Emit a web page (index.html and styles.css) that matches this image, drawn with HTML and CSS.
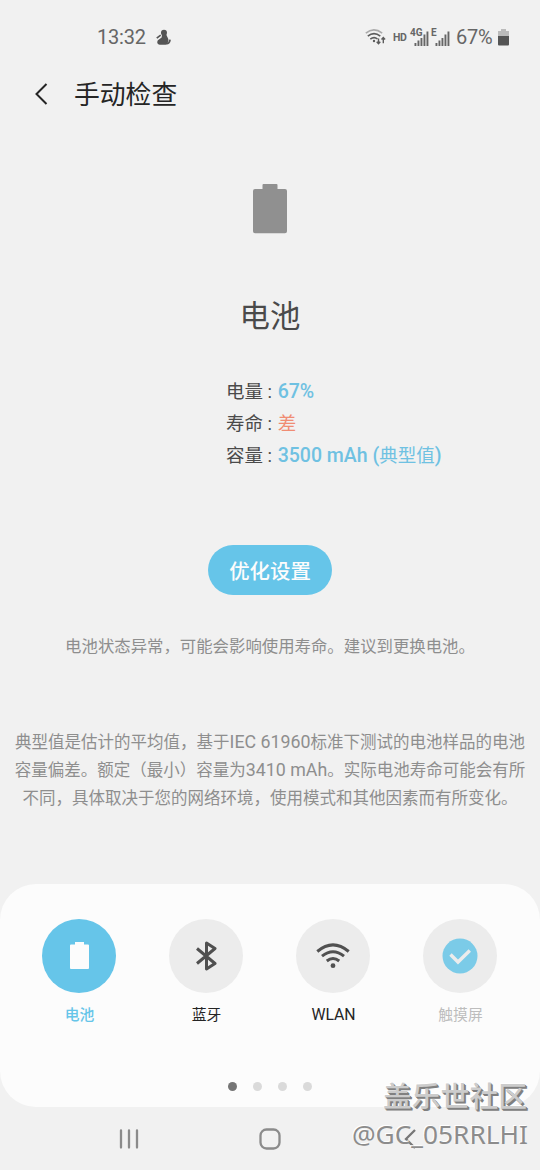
FILE: index.html
```
<!DOCTYPE html>
<html lang="zh-CN">
<head>
<meta charset="utf-8">
<title>手动检查</title>
<link rel="stylesheet" href="styles.css">
</head>
<body>
<div class="screen">
  <div class="status">
    <span class="clock">13:32</span>
    <svg class="notif" width="15" height="17" viewBox="0 0 16 18" fill="#555"><circle cx="8.500" cy="4" r="3.200"/><path d="M6.500 5.500 11 6l2 4.200C14 13 12 16.800 9.500 16.800H4C1.600 16.500.6 14.500 2 12L6 9z"/><path d="M.8 9.600 5 6.400M11 15.500c2 .3 3.600-1 4-4.200" fill="none" stroke="#555" stroke-width="1.800"/></svg>
    <svg class="wifi-s" width="22" height="18" viewBox="0 0 22 18" fill="none" stroke="#5c5c5c" stroke-width="1.600"><path d="M.8 5.200Q8.800-1.400 17.200 5.200" stroke="#aaa"/><path d="M2.800 8.200Q9 3 15.300 8.200M5.300 11.200Q9 8.200 12.500 11"/><circle cx="9" cy="13" r="1.200" fill="#5c5c5c" stroke="none"/><path d="M13.500 10.500v5M11.700 13.800l1.800 1.900 1.800-1.900M18.300 15.300V10M16.500 11.500l1.800-1.900 1.800 1.900" stroke-width="1.400"/></svg>
    <span class="hd">HD</span>
    <span class="signal"><b>4G</b><svg width="15" height="15" viewBox="0 0 14 15" fill="#666"><path d="M0 12h1.900v3H0zM3 9.500h1.900V15H3zM6 7h1.900v8H6zM9 3.500h1.900V15H9zM12 .5h1.900V15H12z"/></svg></span>
    <span class="signal second"><b>E</b><svg width="15" height="15" viewBox="0 0 14 15" fill="#666"><path d="M0 12h1.900v3H0zM3 9.500h1.900V15H3zM6 7h1.900v8H6zM9 3.500h1.900V15H9zM12 .5h1.900V15H12z"/></svg></span>
    <span class="percent">67%</span>
    <svg class="batt-s" width="11" height="17" viewBox="0 0 11 17"><path d="M3 0h5v2h3v5H0V2h3z" fill="#bbb"/><path d="M0 7h11v8.500q0 1-1 1H1q-1 0-1-1z" fill="#555"/></svg>
  </div>
  <header class="header">
    <svg width="14" height="22" viewBox="0 0 14 22" fill="none" stroke="#252525" stroke-width="2"><path d="M12.500 1 2.500 11l10 10"/></svg>
    <h1>手动检查</h1>
  </header>
  <main class="main">
    <svg class="battery" width="34" height="50" viewBox="0 0 34 50" fill="#909090"><path d="M10.500 0h13q1 0 1 1v4H32q2 0 2 2v40.300q0 2-2 2H2q-2 0-2-2V7q0-2 2-2h7.500V1q0-1 1-1z"/></svg>
    <h2>电池</h2>
    <div class="details">
      <p>电量 : <span class="good"><b>67%</b></span></p>
      <p>寿命 : <span class="bad">差</span></p>
      <p>容量 : <span class="good"><b>3500 mAh (</b>典型值<b>)</b></span></p>
    </div>
    <button class="optimize">优化设置</button>
    <p class="notice">电池状态异常，可能会影响使用寿命。建议到更换电池。</p>
    <p class="explain">典型值是估计的平均值，基于<span>IEC 61960</span>标准下测试的电池样品的电池<br>容量偏差。额定（最小）容量为<span>3410 mAh</span>。实际电池寿命可能会有所<br>不同，具体取决于您的网络环境，使用模式和其他因素而有所变化。</p>
  </main>
  <section class="panel">
    <div class="items">
      <div class="item active"><div class="disc"><svg width="19" height="27" viewBox="0 0 19 27" fill="#fcfcfc"><path d="M5 0h9v2.500h4q1 0 1 1V26q0 1-1 1H1q-1 0-1-1V3.500q0-1 1-1h4z"/></svg></div><span>电池</span></div>
      <div class="item"><div class="disc"><svg width="22" height="32" viewBox="0 0 22 32" fill="none" stroke="#505050" stroke-width="3" stroke-linejoin="round"><path d="M2 8.500 20 23.500 11.500 29V3L20 8.500 2 23.500"/></svg></div><span>蓝牙</span></div>
      <div class="item"><div class="disc"><svg width="34" height="28" viewBox="0 0 34 28" fill="none" stroke="#505050" stroke-width="3"><path d="M1.300 9.500Q17-3.800 32.700 9.500M6 14.200Q17 5.200 28 14.200M10.800 19Q17 14 23.200 19"/><circle cx="17" cy="23.700" r="2.400" fill="#505050" stroke="none"/></svg></div><span class="latin">WLAN</span></div>
      <div class="item disabled"><div class="disc"><svg width="36" height="36" viewBox="0 0 36 36"><circle cx="18" cy="18" r="17.500" fill="#7bcbe8"/><path d="M8.500 16.500 16 24 27.800 12.500" fill="none" stroke="#ececec" stroke-width="3.400"/></svg></div><span>触摸屏</span></div>
    </div>
    <div class="dots"><i class="on"></i><i></i><i></i><i></i></div>
  </section>
  <nav class="nav">
    <svg width="20" height="20" viewBox="0 0 20 20" stroke="#8b8b8b" stroke-width="2.300" stroke-linecap="round"><path d="M2 1.500v17M10 1.500v17M18 1.500v17"/></svg>
    <svg width="22" height="22" viewBox="0 0 22 22" fill="none" stroke="#8b8b8b" stroke-width="2.300"><rect x="1.500" y="1.500" width="19" height="19" rx="6"/></svg>
    <svg width="20" height="20" viewBox="0 0 20 20" fill="none" stroke="#777" stroke-width="2.300"><path d="M15 1 6 10l9 9"/></svg>
  </nav>
  <div class="watermark"><div class="community">盖乐世社区</div><div class="user">@GC_05RRLHI</div></div>
</div>
</body>
</html>
```
FILE: styles.css
```
* { box-sizing: border-box; }
body { margin: 0; font-family: Roboto, "Noto Sans CJK SC", sans-serif; }
h1, h2, p { margin: 0; font-weight: 400; }
svg { display: block; flex: none; }
.screen { position: relative; width: 540px; height: 1170px; background: #f1f1f1; display: flex; flex-direction: column; overflow: hidden; }
.status { height: 74px; padding: 0 31px 0 97px; display: flex; align-items: center; color: #666; font-size: 20px; }
.clock { font-size: 20px; letter-spacing: -.2px; width: 59px; }
.wifi-s { margin-left: auto; }
.hd { font-size: 10.5px; font-weight: 700; margin-left: 6px; width: 17px; letter-spacing: -.3px; }
.signal { width: 19px; height: 17px; display: flex; justify-content: flex-end; align-items: flex-end; position: relative; }
.signal b { position: absolute; left: 0; top: 0; font-size: 10px; line-height: 8px; background: #f1f1f1; height: 8px; }
.signal.second { margin-left: 2px; }
.percent { margin-left: 6px; width: 42px; letter-spacing: -.3px; }
.header { height: 40px; padding-left: 34px; display: flex; align-items: center; color: #252525; }
.header h1 { margin-left: 26px; padding-top: 2px; font-size: 25.8px; line-height: 40px; }
.main { height: 770px; padding-top: 69.6px; display: flex; flex-direction: column; align-items: center; color: #4a4a4a; }
.main h2 { margin-top: 61.4px; font-size: 30.4px; line-height: 44px; }
.details { width: 540px; padding-left: 226px; margin-top: 37px; font-size: 18.5px; line-height: 32px; height: 96px; white-space: nowrap; }
.details p { height: 32px; }
.good, .bad { margin-left: 1px; }
.good { color: #6fc1e2; }
.good b { font-size: 19.5px; font-weight: 500; }
.bad { color: #f08c73; }
.optimize { margin-top: 72.900px; width: 124px; height: 50px; border: 0; border-radius: 25px; padding: 0; background: #66c5e9; color: #fcfcfc; font: 500 20.4px Roboto, "Noto Sans CJK SC", sans-serif; white-space: nowrap; }
.notice { margin-top: 38px; font-size: 16.4px; line-height: 28px; color: #8e8e8e; white-space: nowrap; }
.explain { margin-top: 68px; font-size: 16.5px; line-height: 28px; color: #8e8e8e; text-align: center; white-space: nowrap; }
.explain span { font-size: 17.8px; line-height: 20px; }
.panel { height: 223px; border-radius: 36px; background: #fcfcfc; padding-top: 34.5px; display: flex; flex-direction: column; }
.items { padding: 0 15.5px; display: grid; grid-template-columns: repeat(4, 127px); }
.item { display: flex; flex-direction: column; align-items: center; font-size: 14.8px; color: #252525; }
.disc { width: 74px; height: 74px; border-radius: 50%; background: #ececec; display: flex; align-items: center; justify-content: center; }
.item span { margin-top: 11px; line-height: 22px; padding-left: 1px; }
.item .latin { font-size: 15.8px; }
.active { color: #66c5e9; font-weight: 500; }
.active .disc { background: #66c5e9; }
.disabled { color: #bdbdbd; }
.dots { margin-top: 56.5px; display: flex; justify-content: center; gap: 16px; }
.dots i { width: 9px; height: 9px; border-radius: 50%; background: #dadada; }
.dots .on { background: #757575; }
.nav { height: 63px; padding: 0 120px 0 119px; display: flex; align-items: center; justify-content: space-between; }
.watermark { position: absolute; right: 12px; top: 1075px; text-align: right; white-space: nowrap; }
.community { margin-right: 1px; font: 500 28.8px/40px "Noto Sans CJK SC", sans-serif; color: #ccc; text-shadow: 1px 1px 0 #808080, 2px 2px 0 #808080, -1px -1px 0 #fff; }
.user { padding-top: 1px; font: 400 26.3px/36px "Noto Sans", sans-serif; color: #8c8c8c; text-shadow: -1px -1px 0 #fff; }
```
